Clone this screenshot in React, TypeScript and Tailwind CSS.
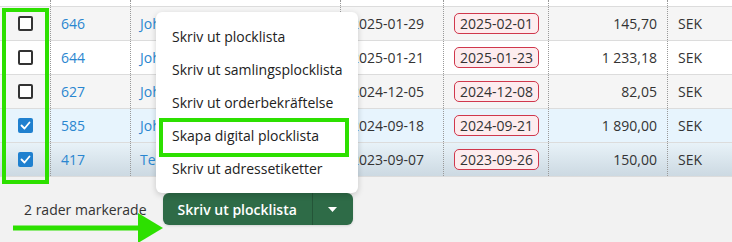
import React from 'react';

const rows = [
  { id: '646', name: 'Johan Andersson', date: '2025-01-29', due: '2025-02-01', amount: '145,70', checked: false, bg: 'bg-[#f5f5f5]' },
  { id: '644', name: 'Johan Andersson', date: '2025-01-21', due: '2025-01-23', amount: '1 233,18', checked: false, bg: 'bg-white' },
  { id: '627', name: 'Johan Andersson', date: '2024-12-05', due: '2024-12-08', amount: '82,05', checked: false, bg: 'bg-[#f5f5f5]' },
  { id: '585', name: 'Johan Andersson', date: '2024-09-18', due: '2024-09-21', amount: '1 890,00', checked: true, bg: 'bg-[#e7f4fd]' },
  { id: '417', name: 'Testkund AB', date: '2023-09-07', due: '2023-09-26', amount: '150,00', checked: true, bg: 'bg-gradient-to-b from-[#e8f2f8] to-[#ccd9e2]' },
];

const menuItems = [
  'Skriv ut plocklista',
  'Skriv ut samlingsplocklista',
  'Skriv ut orderbekräftelse',
  'Skapa digital plocklista',
  'Skriv ut adressetiketter',
];

const Checkbox = ({ checked }: { checked: boolean }) =>
  checked ? (
    <span className="w-[15px] h-[15px] rounded-[2px] bg-[#1f80cf] flex items-center justify-center">
      <svg width="11" height="9" viewBox="0 0 11 9" fill="none">
        <path d="M1.5 4.5l3 3 5-6" stroke="white" strokeWidth="1.8" strokeLinecap="round" strokeLinejoin="round" />
      </svg>
    </span>
  ) : (
    <span className="w-[15px] h-[15px] rounded-[2px] border-2 border-[#333] bg-white" />
  );

export default function App() {
  return (
    <div className="relative w-[732px] h-[242px] overflow-hidden bg-[#f2f2f2] text-[14px] text-[#333]" style={{ fontFamily: '"Open Sans", sans-serif' }}>
      {/* Tabellhuvud (avklippt) */}
      <div className="flex h-[7px] bg-white border-b border-[#dcdcdc]">
        <div className="w-[50px]" />
        <div className="w-[80px] border-l border-dotted border-[#999]" />
        <div className="w-[210px] border-l border-dotted border-[#999]" />
        <div className="w-[103px] border-l border-dotted border-[#999]" />
        <div className="w-[105px] border-l border-dotted border-[#999]" />
        <div className="w-[119px] border-l border-dotted border-[#999]" />
        <div className="flex-1 border-l border-dotted border-[#999]" />
      </div>

      {rows.map((r) => (
        <div key={r.id} className={`flex h-[34px] border-b border-[#dcdcdc] ${r.bg}`}>
          <div className="w-[50px] flex items-center justify-center">
            <Checkbox checked={r.checked} />
          </div>
          <div className="w-[80px] border-l border-dotted border-[#999] flex items-center pl-[10px] text-[#2a86d0]">{r.id}</div>
          <div className="w-[210px] border-l border-dotted border-[#999] flex items-center pl-[9px] text-[#2a86d0] whitespace-nowrap overflow-hidden">{r.name}</div>
          <div className="w-[103px] border-l border-dotted border-[#999] flex items-center pl-[10px]">{r.date}</div>
          <div className="w-[105px] border-l border-dotted border-[#999] flex items-center pl-[10px]">
            <span className="h-[21px] px-[5px] rounded-[5px] border border-[#d0374c] bg-[#fdecee] flex items-center leading-none">{r.due}</span>
          </div>
          <div className="w-[119px] border-l border-dotted border-[#999] flex items-center justify-end pr-[10px]">{r.amount}</div>
          <div className="flex-1 border-l border-dotted border-[#999] flex items-center pl-[10px]">SEK</div>
        </div>
      ))}

      {/* Åtgärdsfält */}
      <div className="flex items-center h-[65px] pt-[16px] pb-[17px] pl-[24px] gap-[16px]">
        <span className="text-[#333]">2 rader markerade</span>
        <div className="flex h-[32px] rounded-[6px] bg-[#2e6b47] text-white font-semibold shadow-sm">
          <button className="px-[15px] border-r border-[#245538]">Skriv ut plocklista</button>
          <button className="w-[40px] flex items-center justify-center">
            <svg width="9" height="5" viewBox="0 0 9 5"><path d="M0 0h9L4.5 5z" fill="white" /></svg>
          </button>
        </div>
      </div>

      {/* Meny */}
      <div className="absolute left-[156px] top-[12px] w-[202px] h-[181px] bg-white rounded-[6px] shadow-[0_2px_6px_rgba(0,0,0,0.18)] pt-[8px]">
        {menuItems.map((m) => (
          <div key={m} className="h-[33px] flex items-center pl-[16px] text-[#222] whitespace-nowrap">{m}</div>
        ))}
      </div>

      {/* Markeringar */}
      <div className="absolute left-[2px] top-[8px] w-[47px] h-[176px] border-[4px] border-[#2de000]" />
      <div className="absolute left-[159px] top-[118px] w-[190px] h-[39px] border-[4px] border-[#2de000]" />
      <svg className="absolute left-0 top-[210px]" width="170" height="32" viewBox="0 0 170 32">
        <rect x="13" y="15.5" width="127" height="5" fill="#2de000" />
        <path d="M138 3L163 18L138 33z" fill="#2de000" />
      </svg>
    </div>
  );
}
